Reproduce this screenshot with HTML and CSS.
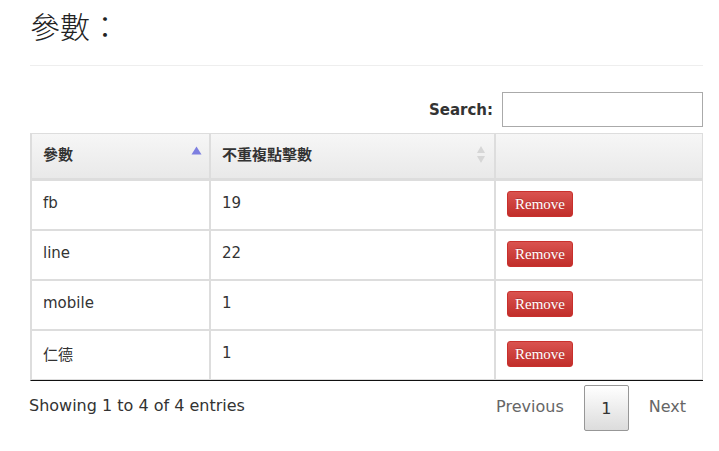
FILE: index.html
```html
<!DOCTYPE html>
<html lang="zh-Hant">
<head>
<meta charset="utf-8">
<title>參數</title>
<link rel="stylesheet" href="styles.css">
</head>
<body>
<div class="page">
  <h1 class="title">參數：</h1>
  <hr class="rule">
  <div class="filter">
    <label class="filter-label" for="q">Search:</label>
    <input class="filter-input" id="q" type="search">
  </div>
  <table class="grid">
    <thead>
      <tr>
        <th class="col-a"><span>參數</span>
          <svg class="sort" width="11" height="9" viewBox="0 0 11 9"><path d="M5.5 0.5 L10.5 8.5 L0.5 8.5 Z" fill="#7d7fe0"/></svg>
        </th>
        <th class="col-b"><span>不重複點擊數</span>
          <svg class="sort sort-both" width="10" height="19" viewBox="0 0 10 19"><path d="M5 1 L9 8 L1 8 Z" fill="#d6d6d6"/><path d="M5 18 L9 11 L1 11 Z" fill="#d6d6d6"/></svg>
        </th>
        <th class="col-c"></th>
      </tr>
    </thead>
    <tbody>
      <tr><td>fb</td><td>19</td><td class="cell-action"><button class="btn-remove">Remove</button></td></tr>
      <tr><td>line</td><td>22</td><td class="cell-action"><button class="btn-remove">Remove</button></td></tr>
      <tr><td>mobile</td><td>1</td><td class="cell-action"><button class="btn-remove">Remove</button></td></tr>
      <tr><td>仁德</td><td>1</td><td class="cell-action"><button class="btn-remove">Remove</button></td></tr>
    </tbody>
  </table>
  <div class="footer">
    <div class="info">Showing 1 to 4 of 4 entries</div>
    <div class="paginate">
      <span class="page-link">Previous</span>
      <span class="page-current">1</span>
      <span class="page-link">Next</span>
    </div>
  </div>
</div>
</body>
</html>
```
FILE: styles.css
```css
html, body {
  margin: 0;
  padding: 0;
  background: #fff;
}
body {
  font-family: "DejaVu Sans", Verdana, "Noto Sans CJK TC", sans-serif;
  font-size: 15px;
  color: #333;
}
.page {
  width: 673px;
  margin-left: 30px;
}
.title {
  margin: 0;
  padding-top: 5px;
  font-family: "Noto Sans CJK TC", sans-serif;
  font-weight: 300;
  font-size: 30px;
  line-height: 40px;
  color: #222;
}
.rule {
  margin: 20px 0 0 0;
  border: 0;
  border-top: 1px solid #eee;
  height: 0;
}
.filter {
  display: flex;
  justify-content: flex-end;
  align-items: center;
  gap: 9px;
  margin-top: 26px;
}
.filter-label {
  font-weight: bold;
  font-size: 15px;
  color: #333;
}
.filter-input {
  box-sizing: border-box;
  width: 201px;
  height: 35px;
  border: 1px solid #aaa;
  margin: 0;
  padding: 4px;
  outline: none;
}
.grid {
  margin-top: 6px;
  margin-left: 0;
  width: 673px;
  border-collapse: separate;
  border-spacing: 0;
  border-left: 1px solid #ddd;
  border-bottom: 1px solid #111;
}
.grid th, .grid td {
  border: 1px solid #ddd;
  text-align: left;
  vertical-align: middle;
  padding: 0 12px 0 11px;
}
.grid th {
  position: relative;
  height: 38px;
  padding-bottom: 6px;
  font-weight: bold;
  font-size: 15px;
  font-family: "Noto Sans CJK TC", "DejaVu Sans", sans-serif;
  color: #333;
  background: linear-gradient(#f6f6f6, #e9e9e9);
  border-color: #ddd;
  border-bottom: 2px solid #ddd;
}
.grid td {
  height: 44px;
  padding-bottom: 4px;
  font-family: "DejaVu Sans", "Noto Sans CJK TC", sans-serif;
}
.grid td.cell-action {
  padding-bottom: 2px;
}
.col-a { width: 154px; }
.col-b { width: 260px; }
.sort {
  position: absolute;
  right: 7px;
  top: 12px;
}
.sort-both {
  right: 8px;
  top: 11px;
}
.btn-remove {
  font-family: "Liberation Serif", serif;
  font-size: 15px;
  color: #fff;
  height: 26px;
  width: 66px;
  padding: 0;
  border: 1px solid #c9302c;
  border-radius: 3px;
  background: linear-gradient(#d9534f, #c12e2a);
  text-shadow: 0 -1px 0 rgba(0,0,0,0.2);
}
.footer {
  display: flex;
  justify-content: space-between;
  align-items: flex-start;
  margin-top: 4px;
  margin-left: -1px;
}
.info {
  font-size: 16px;
  color: #333;
  margin-top: 11px;
}
.paginate {
  display: flex;
  align-items: center;
  gap: 20px;
  margin-right: 17px;
}
.page-link {
  color: #666;
  font-size: 16px;
  padding-bottom: 4px;
}
.page-current {
  box-sizing: border-box;
  width: 45px;
  height: 46px;
  display: flex;
  align-items: center;
  justify-content: center;
  font-size: 16px;
  border: 1px solid #979797;
  border-radius: 2px;
  background: linear-gradient(#fff, #dcdcdc);
  color: #333;
}
```
